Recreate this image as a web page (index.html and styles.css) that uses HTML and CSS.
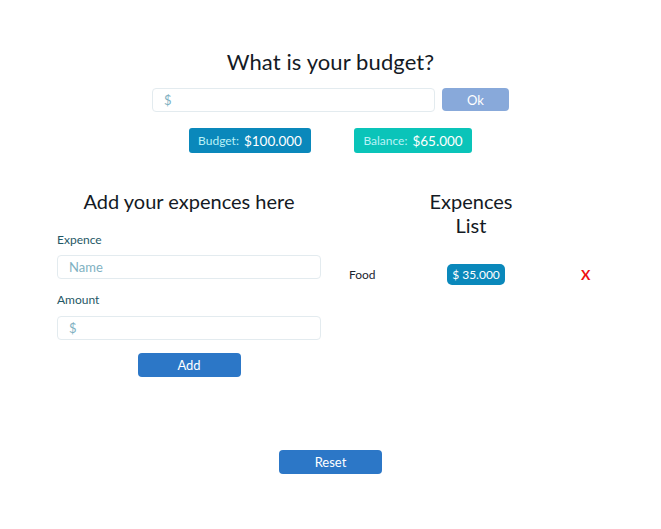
FILE: index.html
```html
<!DOCTYPE html>
<html>
<head>
<meta charset="utf-8">
<link rel="stylesheet" href="styles.css">
</head>
<body>
<div class="app">
  <header class="budget">
    <h1 class="title">What is your budget?</h1>
    <div class="budget-form">
      <input class="field budget-input" type="text" placeholder="$">
      <button class="btn btn-ok">Ok</button>
    </div>
    <div class="totals">
      <div class="pill pill-budget"><span class="pill-label">Budget:</span> <span class="pill-value">$100.000</span></div>
      <div class="pill pill-balance"><span class="pill-label">Balance:</span> <span class="pill-value">$65.000</span></div>
    </div>
  </header>

  <main class="columns">
    <section class="col add-col">
      <h2 class="col-title">Add your expences here</h2>
      <label class="label">Expence</label>
      <input class="field" type="text" placeholder="Name">
      <label class="label">Amount</label>
      <input class="field" type="text" placeholder="$">
      <div class="center"><button class="btn btn-add">Add</button></div>
    </section>
    <section class="col list-col">
      <h2 class="col-title list-title">Expences<br>List</h2>
      <div class="item">
        <span class="item-name">Food</span>
        <span class="item-amount">$ 35.000</span>
        <span class="item-del">X</span>
      </div>
    </section>
  </main>

  <div class="center reset-row"><button class="btn btn-reset">Reset</button></div>
</div>
</body>
</html>
```

FILE: styles.css
```css
* { box-sizing: border-box; }
body {
  margin: 0;
  background: #fff;
  font-family: "Lato", "Open Sans", sans-serif;
  color: #141a24;
}
.app { width: 661px; }
.budget { text-align: center; padding-top: 47px; }
.title {
  margin: 0;
  font-size: 22px;
  font-weight: 400;
  line-height: 30px;
  letter-spacing: 0.1px;
}
.budget-form {
  display: flex;
  justify-content: center;
  gap: 7px;
  margin-top: 11px;
}
.field {
  display: block;
  height: 24px;
  border: 1px solid #e3ebef;
  border-radius: 4px;
  padding: 0 11px;
  font-family: inherit;
  font-size: 13px;
  color: #333;
  background: #fff;
  outline: none;
}
.field::placeholder { color: #7fb1c2; }
.budget-input { width: 283px; }
.btn {
  border: none;
  border-radius: 4px;
  color: #fff;
  font-family: inherit;
  font-size: 13px;
  height: 24px;
  cursor: pointer;
}
.btn-ok { width: 67px; height: 23px; background: #88a9da; }
.totals {
  display: flex;
  justify-content: center;
  gap: 43px;
  margin-top: 16px;
}
.pill {
  height: 25px;
  border-radius: 3px;
  display: flex;
  align-items: center;
  justify-content: center;
  gap: 5px;
  color: #fff;
}
.pill-budget { width: 122px; background: #0a88bb; }
.pill-balance { width: 118px; background: #0ac4b9; }
.pill-label { font-size: 12px; color: #b9f2f7; }
.pill-value { font-size: 13.5px; }

.columns {
  display: grid;
  grid-template-columns: 282px 282px;
  margin: 36px 0 0 48px;
}
.col { padding: 0 9px; }
.col-title {
  margin: 0;
  text-align: center;
  font-size: 20px;
  font-weight: 400;
  line-height: 24px;
}
.label {
  display: block;
  font-size: 12px;
  color: #1f5866;
  line-height: 16px;
}
.add-col .col-title { margin-bottom: 19px; }
.add-col .field { width: 264px; }
.add-col .label + .field { margin-top: 7px; }
.add-col .field + .label { margin-top: 13px; }
.add-col .label + .field + .label + .field { margin-top: 8px; }
.center { display: flex; justify-content: center; }
.add-col .center { margin-top: 13px; }
.btn-add { width: 103px; background: #2c77c7; }

.item {
  display: flex;
  align-items: center;
  margin: 27px 0 0 10px;
  height: 21px;
}
.item-name { width: 98px; font-size: 12px; color: #1b2430; }
.item-amount {
  width: 58px;
  height: 21px;
  border-radius: 5px;
  background: #0a88bb;
  color: #fff;
  font-size: 12px;
  display: flex;
  align-items: center;
  justify-content: center;
}
.item-del {
  margin-left: 76px;
  color: #ee1111;
  font-weight: 700;
  font-size: 14px;
}
.reset-row { margin-top: 73px; }
.btn-reset { width: 103px; background: #2c77c7; }
```
